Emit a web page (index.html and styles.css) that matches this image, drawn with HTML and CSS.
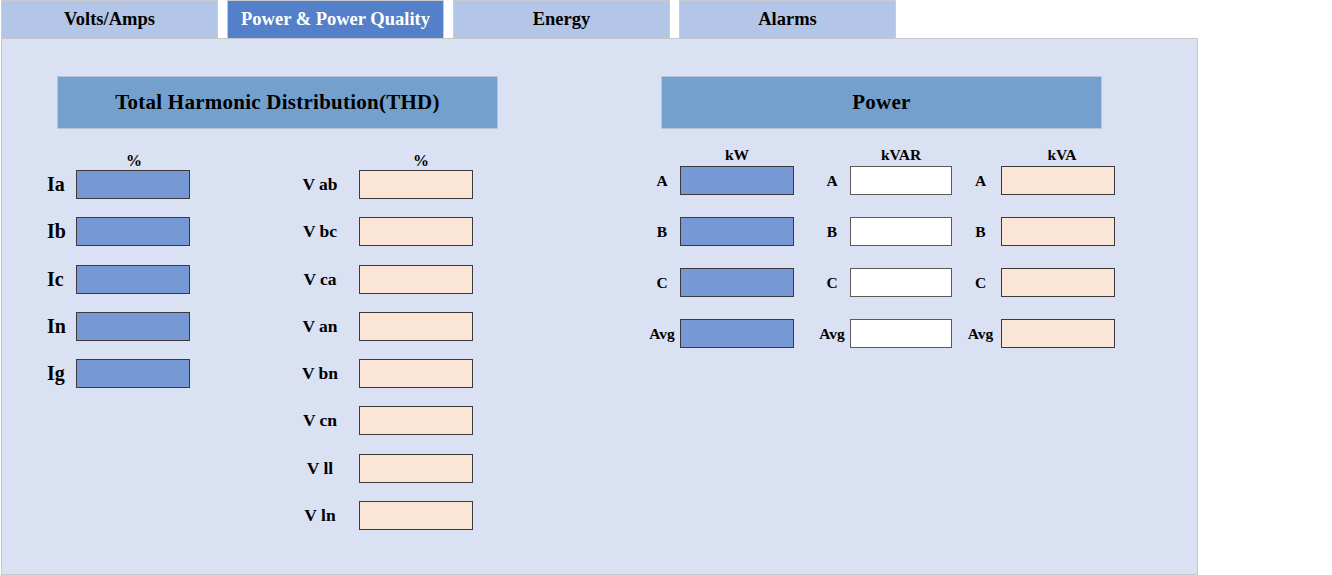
FILE: index.html
```html
<!DOCTYPE html>
<html>
<head>
<meta charset="utf-8">
<link rel="stylesheet" href="styles.css">
</head>
<body>
<div class="tabs">
  <div class="tab">Volts/Amps</div>
  <div class="tab active">Power &amp; Power Quality</div>
  <div class="tab">Energy</div>
  <div class="tab">Alarms</div>
</div>
<div class="panel">
  <section class="thd">
    <div class="title">Total Harmonic Distribution(THD)</div>
    <div class="thd-body">
      <div class="cur-group">
        <div class="unit">%</div>
        <div class="rows thd-rows">
          <div class="row"><span class="cur-label">Ia</span><span class="box blue"></span></div>
          <div class="row"><span class="cur-label">Ib</span><span class="box blue"></span></div>
          <div class="row"><span class="cur-label">Ic</span><span class="box blue"></span></div>
          <div class="row"><span class="cur-label">In</span><span class="box blue"></span></div>
          <div class="row"><span class="cur-label">Ig</span><span class="box blue"></span></div>
        </div>
      </div>
      <div class="volt-group">
        <div class="unit unit-v">%</div>
        <div class="rows thd-rows">
          <div class="row"><span class="v-label">V ab</span><span class="box peach"></span></div>
          <div class="row"><span class="v-label">V bc</span><span class="box peach"></span></div>
          <div class="row"><span class="v-label">V ca</span><span class="box peach"></span></div>
          <div class="row"><span class="v-label">V an</span><span class="box peach"></span></div>
          <div class="row"><span class="v-label">V bn</span><span class="box peach"></span></div>
          <div class="row"><span class="v-label">V cn</span><span class="box peach"></span></div>
          <div class="row"><span class="v-label">V ll</span><span class="box peach"></span></div>
          <div class="row"><span class="v-label">V ln</span><span class="box peach"></span></div>
        </div>
      </div>
    </div>
  </section>
  <section class="power">
    <div class="title">Power</div>
    <div class="power-body">
      <div class="p-group g1">
        <div class="p-head"><span class="p-spacer"></span><span class="p-unit">kW</span></div>
        <div class="rows p-rows">
          <div class="row"><span class="p-label">A</span><span class="box blue"></span></div>
          <div class="row"><span class="p-label">B</span><span class="box blue"></span></div>
          <div class="row"><span class="p-label">C</span><span class="box blue"></span></div>
          <div class="row"><span class="p-label">Avg</span><span class="box blue"></span></div>
        </div>
      </div>
      <div class="p-group g2">
        <div class="p-head"><span class="p-spacer"></span><span class="p-unit">kVAR</span></div>
        <div class="rows p-rows">
          <div class="row"><span class="p-label">A</span><span class="box white"></span></div>
          <div class="row"><span class="p-label">B</span><span class="box white"></span></div>
          <div class="row"><span class="p-label">C</span><span class="box white"></span></div>
          <div class="row"><span class="p-label">Avg</span><span class="box white"></span></div>
        </div>
      </div>
      <div class="p-group g3">
        <div class="p-head"><span class="p-spacer"></span><span class="p-unit">kVA</span></div>
        <div class="rows p-rows">
          <div class="row"><span class="p-label">A</span><span class="box peach"></span></div>
          <div class="row"><span class="p-label">B</span><span class="box peach"></span></div>
          <div class="row"><span class="p-label">C</span><span class="box peach"></span></div>
          <div class="row"><span class="p-label">Avg</span><span class="box peach"></span></div>
        </div>
      </div>
    </div>
  </section>
</div>
</body>
</html>
```

FILE: styles.css
```css
* { box-sizing: border-box; }
html, body { margin: 0; padding: 0; background: #ffffff; }
body {
  font-family: "Liberation Serif", "Times New Roman", serif;
  font-weight: bold;
  color: #000;
  width: 1332px;
  height: 575px;
  overflow: hidden;
}

.tabs {
  display: flex;
  gap: 9px;
  padding-left: 1px;
  height: 38px;
}
.tab {
  width: 217px;
  height: 38px;
  background: #b4c6e7;
  border: 1px solid #c9cbd0;
  border-bottom: none;
  font-size: 18.5px;
  line-height: 37px;
  text-align: center;
}
.tab.active {
  background: #5480c9;
  color: #ffffff;
}

.panel {
  margin-left: 1px;
  width: 1197px;
  height: 537px;
  background: #dae1f3;
  border: 1px solid #c6c8cc;
  display: flex;
  padding-top: 37px;
  padding-left: 38px;
}

.title {
  margin-left: 17px;
  width: 441px;
  height: 53px;
  background: #74a0cd;
  border: 1px solid #b9c4d6;
  font-size: 21px;
  letter-spacing: 0.25px;
  line-height: 51px;
  text-align: center;
}

.thd { width: 604px; }
.power { width: 480px; }

.thd-body { display: flex; }
.cur-group { width: 150px; }
.volt-group { margin-left: 95px; }

.unit {
  margin-top: 23px;
  height: 18px;
  font-size: 16px;
  line-height: 18px;
  text-align: right;
  padding-right: 48px;
}
.unit-v { padding-right: 44px; }

.rows { display: flex; flex-direction: column; }
.thd-rows { gap: 18.3px; }
.p-rows { gap: 22px; }

.row { display: flex; align-items: center; height: 29px; }

.box {
  display: block;
  height: 29px;
  width: 114px;
  border: 1px solid #3a3a3a;
}
.blue { background: #7698d4; }
.peach { background: #fbe5d6; }
.white { background: #ffffff; border-color: #5a5a5a; }

.cur-label {
  width: 36px;
  padding-left: 7px;
  font-size: 20px;
}
.v-label {
  width: 70px;
  margin-right: 4px;
  text-align: center;
  font-size: 17.5px;
}

.power-body { display: flex; }
.p-head {
  display: flex;
  margin-top: 17px;
  margin-bottom: 3px;
  height: 17px;
  font-size: 15.5px;
  line-height: 17px;
}
.p-unit { text-align: center; }
.p-label {
  text-align: center;
  font-size: 15.5px;
}

.g1 .p-spacer, .g1 .p-label { width: 36px; }
.g1 .p-unit { width: 114px; }
.g2 { margin-left: 16px; }
.g2 .p-spacer { width: 40px; }
.g2 .p-label { width: 40px; padding-left: 4px; }
.g2 .box { width: 102px; }
.g2 .p-unit { width: 102px; }
.g3 { margin-left: 8px; }
.g3 .p-spacer, .g3 .p-label { width: 41px; }
.g3 .p-unit { width: 114px; padding-left: 8px; }
```
